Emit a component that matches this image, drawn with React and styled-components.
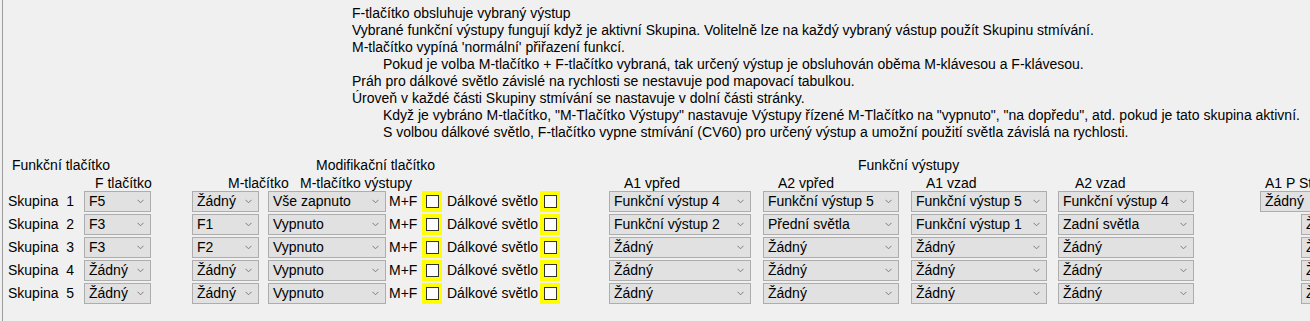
import React from "react"
import styled, { createGlobalStyle } from "styled-components"

const GlobalStyle = createGlobalStyle`
  html, body {
    margin: 0;
    padding: 0;
    background: #f0f0f0;
  }
  body {
    font-family: "Liberation Sans", Arial, sans-serif;
    font-size: 14px;
    color: #000;
  }
`

const info = [
  { text: "F-tlačítko obsluhuje vybraný výstup" },
  { text: "Vybrané funkční výstupy fungují když je aktivní Skupina. Volitelně lze na každý vybraný vástup použít Skupinu stmívání." },
  { text: "M-tlačítko vypíná 'normální' přiřazení funkcí." },
  { text: "Pokud je volba M-tlačítko + F-tlačítko vybraná, tak určený výstup je obsluhován oběma M-klávesou a F-klávesou.", indent: true },
  { text: "Práh pro dálkové světlo závislé na rychlosti se nestavuje pod mapovací tabulkou." },
  { text: "Úroveň v každé části Skupiny stmívání se nastavuje v dolní části stránky." },
  { text: "Když je vybráno M-tlačítko, \"M-Tlačítko Výstupy\" nastavuje Výstupy řízené M-Tlačítko na \"vypnuto\", \"na dopředu\", atd. pokud je tato skupina aktivní.", indent: true },
  { text: "S volbou dálkové světlo, F-tlačítko vypne stmívání (CV60) pro určený výstup a umožní použití světla závislá na rychlosti.", indent: true },
]

const groups = [
  { f: "F5", m: "Žádný", mo: "Vše zapnuto", outs: ["Funkční výstup 4", "Funkční výstup 5", "Funkční výstup 5", "Funkční výstup 4"] },
  { f: "F3", m: "F1", mo: "Vypnuto", outs: ["Funkční výstup 2", "Přední světla", "Funkční výstup 1", "Zadní světla"] },
  { f: "F3", m: "F2", mo: "Vypnuto", outs: ["Žádný", "Žádný", "Žádný", "Žádný"] },
  { f: "Žádný", m: "Žádný", mo: "Vypnuto", outs: ["Žádný", "Žádný", "Žádný", "Žádný"] },
  { f: "Žádný", m: "Žádný", mo: "Vypnuto", outs: ["Žádný", "Žádný", "Žádný", "Žádný"] },
]

const outWidths = [142, 136, 136, 136]

function Combo({ value, width }) {
  return (
    <ComboBox $w={width}>
      <ComboText>{value}</ComboText>
      <svg width="7" height="5" viewBox="0 0 7 5">
        <polyline points="0.5,0.8 3.5,3.8 6.5,0.8" fill="none" stroke="#7c7c7c" strokeWidth="1" />
      </svg>
    </ComboBox>
  )
}

function Check() {
  return (
    <CheckCell>
      <CheckBox />
    </CheckCell>
  )
}

export default function App() {
  return (
    <Frame>
      <GlobalStyle />
      <InfoBlock>
        {info.map((line, i) => (
          <InfoLine key={i} $indent={line.indent}>{line.text}</InfoLine>
        ))}
      </InfoBlock>

      <TopHeadings>
        <span>Funkční tlačítko</span>
        <span>Modifikační tlačítko</span>
        <span>Funkční výstupy</span>
      </TopHeadings>

      <SubHeadings>
        <span>F tlačítko</span>
        <span>M-tlačítko</span>
        <span>M-tlačítko výstupy</span>
        <span>A1 vpřed</span>
        <span>A2 vpřed</span>
        <span>A1 vzad</span>
        <span>A2 vzad</span>
        <span>A1 P St</span>
      </SubHeadings>

      <Table>
        {groups.map((g, i) => (
          <Row key={i}>
            <GroupLabel>{`Skupina  ${i + 1}`}</GroupLabel>
            <Combo value={g.f} width={67} />
            <Combo value={g.m} width={67} />
            <Combo value={g.mo} width={118} />
            <CellText $pad={3}>M+F</CellText>
            <Check />
            <CellText $pad={5}>Dálkové světlo</CellText>
            <Check />
            {g.outs.map((o, j) => (
              <Combo key={j} value={o} width={outWidths[j]} />
            ))}
            <LastCell $shift={i === 0 ? 0 : 41}>
              <Combo value={i === 0 ? "Žádný" : "Ž"} width={i === 0 ? 50 : 9} />
            </LastCell>
          </Row>
        ))}
      </Table>
    </Frame>
  )
}

const Frame = styled.div`
  height: 100vh;
  overflow: hidden;
  background: linear-gradient(
    to right,
    #f0f0f0 2px,
    #9c9c9c 2px,
    #9c9c9c 3px,
    #f0f0f0 3px
  );
`

const InfoBlock = styled.div`
  padding: 5px 0 0 352px;
  display: flex;
  flex-direction: column;
`

const InfoLine = styled.div`
  line-height: 17px;
  white-space: nowrap;
  padding-left: ${(p) => (p.$indent ? "31px" : "0")};
`

const TopHeadings = styled.div`
  display: grid;
  grid-template-columns: 304px 542px auto;
  padding-left: 12px;
  margin-top: 16px;
  line-height: 17px;
  white-space: nowrap;
`

const SubHeadings = styled.div`
  display: grid;
  grid-template-columns: 133px 72px 324px 154px 148px 149px 190px auto;
  padding-left: 95px;
  margin-top: 1px;
  line-height: 16px;
  white-space: nowrap;
`

const Table = styled.div`
  display: flex;
  flex-direction: column;
`

const Row = styled.div`
  display: grid;
  grid-template-columns: 76px 108px 76px 118px 36px 20px 98px 69px 154px 148px 147px 202px 1fr;
  align-items: start;
  height: 23px;
  padding-left: 8px;
`

const GroupLabel = styled.div`
  height: 21px;
  line-height: 21px;
  white-space: pre;
`

const ComboBox = styled.div`
  box-sizing: border-box;
  width: ${(p) => p.$w}px;
  height: 21px;
  display: flex;
  align-items: center;
  justify-content: space-between;
  gap: 4px;
  padding: 0 6px 0 4px;
  background: #e1e1e1;
  border: 1px solid #adadad;
  border-right-width: ${(p) => (p.$w < 60 ? 0 : 1)}px;
  white-space: nowrap;
  overflow: hidden;
  flex-shrink: 0;
`

const ComboText = styled.span`
  line-height: 19px;
`

const CellText = styled.div`
  height: 21px;
  line-height: 21px;
  padding-left: ${(p) => p.$pad}px;
  white-space: nowrap;
`

const CheckCell = styled.div`
  box-sizing: border-box;
  width: 20px;
  height: 21px;
  background: #ffff00;
  display: flex;
  align-items: center;
  justify-content: center;
`

const CheckBox = styled.div`
  box-sizing: border-box;
  width: 13px;
  height: 13px;
  background: #ffffff;
  border: 1px solid #333333;
`

const LastCell = styled.div`
  display: flex;
  padding-left: ${(p) => p.$shift}px;
`
